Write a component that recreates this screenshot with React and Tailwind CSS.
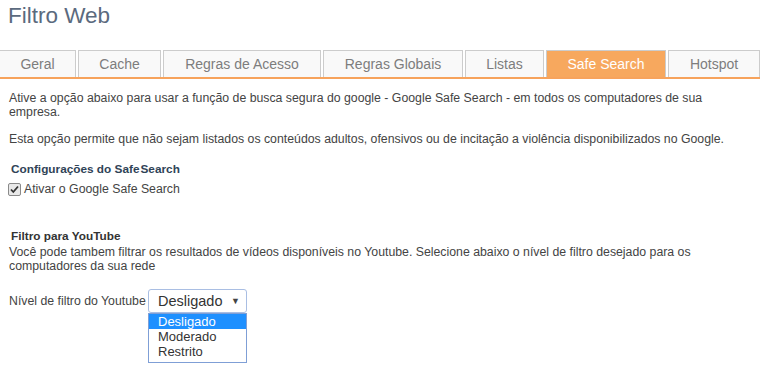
import React from 'react'

const tabs = [
  { label: 'Geral', w: 'w-[76px] border-l-0' },
  { label: 'Cache', w: 'w-[83px]' },
  { label: 'Regras de Acesso', w: 'w-[158px]' },
  { label: 'Regras Globais', w: 'w-[140px]' },
  { label: 'Listas', w: 'w-[79px]' },
  { label: 'Safe Search', w: 'w-[120px]', active: true },
  { label: 'Hotspot', w: 'w-[92px]' },
]

function Tabs() {
  return (
    <div className="mt-[20px] flex gap-[2px] border-b-2 border-[#f7a35c]">
      {tabs.map((t) => (
        <div
          key={t.label}
          className={`${t.w} h-[27px] flex items-center justify-center border border-b-0 border-[#cccccc] text-[14px] ${
            t.active ? 'bg-[#f7a85e] text-white' : 'bg-[#f9f9f9] text-[#7d7d7d]'
          }`}
        >
          {t.label}
        </div>
      ))}
    </div>
  )
}

function Checkbox() {
  return (
    <span className="w-[13px] h-[13px] rounded-[2px] border border-[#8a8a8a] bg-[#e9e9e9] flex items-center justify-center">
      <svg width="11" height="11" viewBox="0 0 11 11">
        <path d="M2 5.5 L4.3 8 L9 2.5" fill="none" stroke="#333" strokeWidth="1.8" />
      </svg>
    </span>
  )
}

function FilterSelect() {
  const options = ['Desligado', 'Moderado', 'Restrito']
  return (
    <div className="relative">
      <div className="w-[99px] h-[24px] rounded-[3px] border border-[#a9bee3] bg-white flex items-center pl-[9px] pr-[6px] text-[14.5px] text-[#333]">
        <span className="flex-1">Desligado</span>
        <span className="text-[9px] text-[#444]">▼</span>
      </div>
      <div className="absolute top-full left-0 w-[99px] border border-[#7f9fd6] bg-white pb-[3px] text-[13px] leading-[15px] text-[#333]">
        {options.map((o, i) => (
          <div key={o} className={`pl-[9px] ${i === 0 ? 'bg-[#1e90ff] text-white' : ''}`}>
            {o}
          </div>
        ))}
      </div>
    </div>
  )
}

export default function App() {
  return (
    <div className="w-[760px] h-[390px] bg-white overflow-hidden font-['Liberation_Sans',Arial,sans-serif]">
      <h1 className="pl-[8px] pt-[2px] text-[22.5px] leading-[28px] text-[#5b6a7e]">Filtro Web</h1>
      <Tabs />

      <div className="w-[740px] pl-[9px] pt-[12px] text-[12.3px] leading-[14px] text-[#444]">
        <p>
          Ative a opção abaixo para usar a função de busca segura do google - Google Safe Search - em todos os
          computadores de sua empresa.
        </p>
        <p className="mt-[13px]">
          Esta opção permite que não sejam listados os conteúdos adultos, ofensivos ou de incitação a violência
          disponibilizados no Google.
        </p>

        <h2 className="mt-[16px] pl-[2px] text-[11.8px] font-bold text-[#2f4357]">
          Configurações do Safe<span className="ml-[1px]">Search</span>
        </h2>
        <div className="mt-[6px] -ml-[1px] flex items-center gap-[3px]">
          <Checkbox />
          <span>Ativar o Google Safe Search</span>
        </div>

        <h2 className="mt-[33px] pl-[2px] text-[11.8px] font-bold text-[#333]">Filtro para YouTube</h2>
        <p className="mt-[2px]">
          Você pode tambem filtrar os resultados de vídeos disponíveis no Youtube. Selecione abaixo o nível de filtro
          desejado para os computadores da sua rede
        </p>

        <div className="mt-[16px] flex items-center">
          <span className="w-[139px]">Nível de filtro do Youtube</span>
          <FilterSelect />
        </div>
      </div>
    </div>
  )
}
